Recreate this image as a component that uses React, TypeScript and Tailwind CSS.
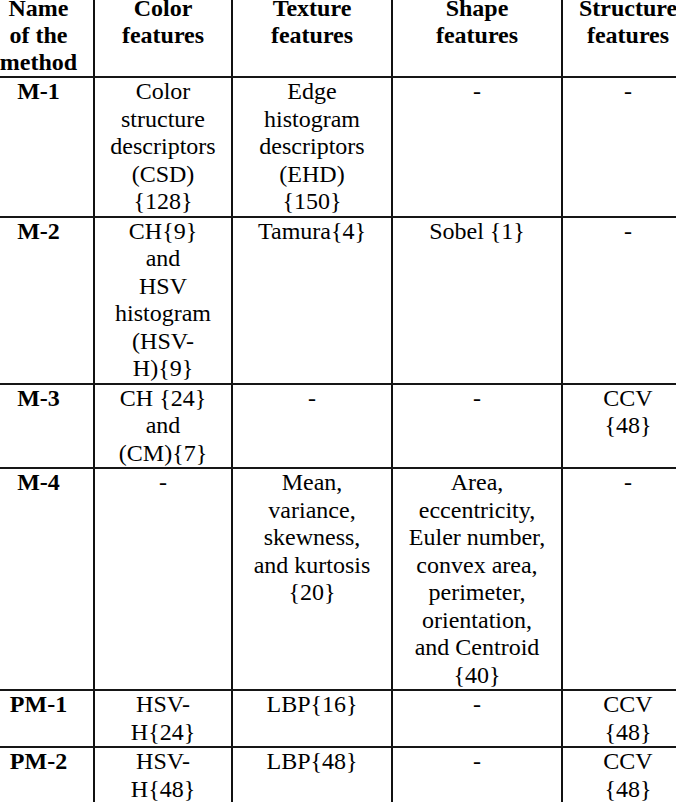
const rows: { name: string; cells: string[][] }[] = [
  {
    name: "M-1",
    cells: [
      ["Color", "structure", "descriptors", "(CSD)", "{128}"],
      ["Edge", "histogram", "descriptors", "(EHD)", "{150}"],
      ["-"],
      ["-"],
    ],
  },
  {
    name: "M-2",
    cells: [
      ["CH{9}", "and", "HSV", "histogram", "(HSV-", "H){9}"],
      ["Tamura{4}"],
      ["Sobel {1}"],
      ["-"],
    ],
  },
  {
    name: "M-3",
    cells: [["CH {24}", "and", "(CM){7}"], ["-"], ["-"], ["CCV", "{48}"]],
  },
  {
    name: "M-4",
    cells: [
      ["-"],
      ["Mean,", "variance,", "skewness,", "and kurtosis", "{20}"],
      [
        "Area,",
        "eccentricity,",
        "Euler number,",
        "convex area,",
        "perimeter,",
        "orientation,",
        "and Centroid",
        "{40}",
      ],
      ["-"],
    ],
  },
  {
    name: "PM-1",
    cells: [["HSV-", "H{24}"], ["LBP{16}"], ["-"], ["CCV", "{48}"]],
  },
  {
    name: "PM-2",
    cells: [["HSV-", "H{48}"], ["LBP{48}"], ["-"], ["CCV", "{48}"]],
  },
];

const headers = [
  ["Name", "of the", "method"],
  ["Color", "features"],
  ["Texture", "features"],
  ["Shape", "features"],
  ["Structure", "features"],
];

const cols = "grid grid-cols-[113px_138px_160px_170px_130px]";

function Lines({ lines, bold }: { lines: string[]; bold?: boolean }) {
  return (
    <>
      {lines.map((l, i) => (
        <div key={i} className={`whitespace-nowrap ${bold ? "font-bold" : ""}`}>
          {l}
        </div>
      ))}
    </>
  );
}

export default function App() {
  return (
    <div className="w-[676px] h-[802px] overflow-hidden bg-white text-black">
      <div
        className="w-[711px] ml-[-18px] mt-[-9px] text-[24px] leading-[27.5px] text-center"
        style={{ fontFamily: '"Liberation Serif", "Times New Roman", serif' }}
      >
        {/* header */}
        <div className={`${cols} border-b-2 border-[#161616]`}>
          {headers.map((h, i) => (
            <div
              key={i}
              className={`pt-[4px] leading-[27px] ${i < 4 ? "border-r-2 border-[#111]" : ""} ${i === 0 ? "pl-[2px]" : ""}`}
            >
              <Lines lines={h} bold />
            </div>
          ))}
        </div>

        {rows.map((r) => (
          <div key={r.name} className={`${cols} border-b-2 border-[#161616]`}>
            <div className="border-r-2 border-[#111] pl-[2px]">
              <Lines lines={[r.name]} bold />
            </div>
            {r.cells.map((c, i) => (
              <div key={i} className={i < 3 ? "border-r-2 border-[#111]" : ""}>
                <Lines lines={c} />
              </div>
            ))}
          </div>
        ))}
      </div>
    </div>
  );
}
